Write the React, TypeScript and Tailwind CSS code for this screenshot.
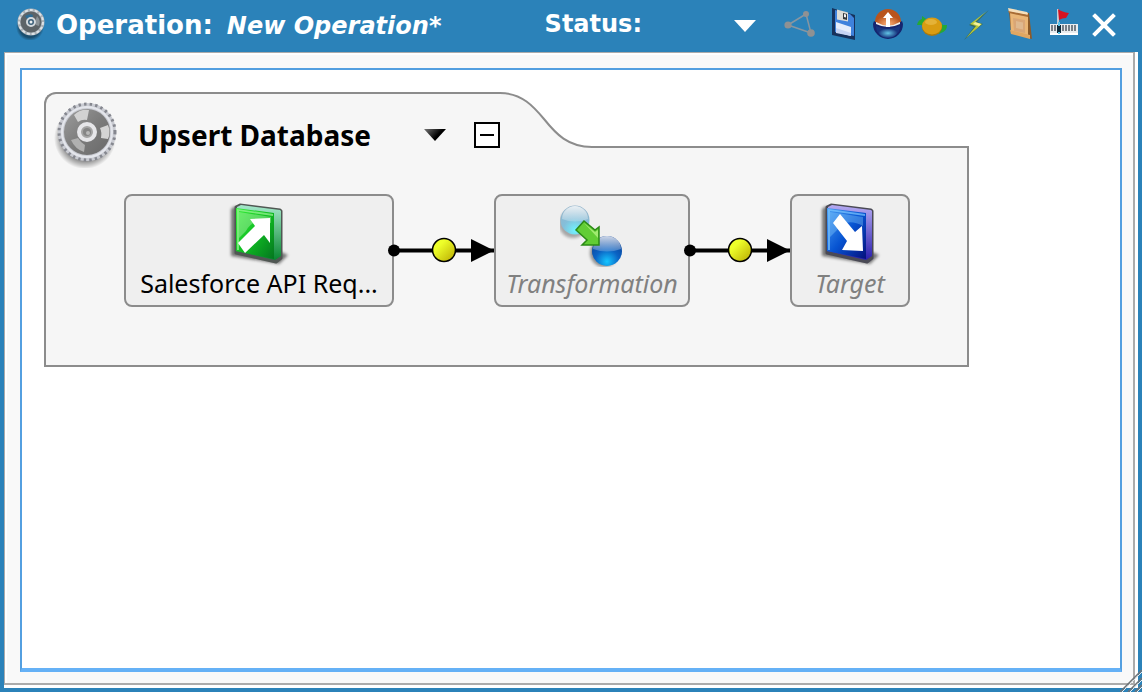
import { useState } from 'react';
import type { ReactNode } from 'react';

interface IconButtonProps {
  label: string;
  children: ReactNode;
}

interface NodeProps {
  label: string;
  width: string;
  placeholder?: boolean;
  children: ReactNode;
}

function GearIcon({ className }: { className: string }) {
  return (
    <svg viewBox="0 0 66 66" className={className} aria-hidden="true">
      <defs>
        <linearGradient id="gear-face" x1="0" y1="0" x2="1" y2="1">
          <stop offset="0" stopColor="#a2a2a2" />
          <stop offset="0.5" stopColor="#7c7c7c" />
          <stop offset="1" stopColor="#666" />
        </linearGradient>
        <radialGradient id="gear-shadow">
          <stop offset="0.75" stopColor="#000" stopOpacity="0.4" />
          <stop offset="1" stopColor="#000" stopOpacity="0" />
        </radialGradient>
      </defs>
      <circle cx="31" cy="36" r="31" fill="url(#gear-shadow)" />
      <circle cx="33" cy="30" r="27" fill="url(#gear-face)" />
      <circle cx="33" cy="30" r="26" fill="none" stroke="#c9cbd2" strokeWidth="6" />
      <circle cx="33" cy="30" r="28" fill="none" stroke="#85878f" strokeWidth="3" strokeDasharray="2.4 3.2" />
      <circle cx="33" cy="30" r="25" fill="none" stroke="#e4e6ec" strokeWidth="2" />
      <path d="M20 13q6-6 15-5l-2 10q-5-1-9 2z" fill="#d2d2d2" />
      <path d="M54 23q3 7 0 14l-7-1q1-6-1-10z" fill="#d4d4d4" />
      <path d="M17 38l7-2q3 5 7 7l-1 7q-9-3-13-12z" fill="#b0b0b0" />
      <circle cx="33" cy="30" r="8" fill="#a4a4a4" stroke="#e6e6e9" strokeWidth="4" />
      <circle cx="33" cy="30" r="4" fill="#858585" />
      <circle cx="34" cy="31" r="2" fill="#b9b9b9" />
    </svg>
  );
}

function WindowIcon() {
  return (
    <svg viewBox="0 0 32 32" className="ml-3 size-8" aria-hidden="true">
      <circle cx="14" cy="19" r="14" fill="url(#gear-shadow)" />
      <circle cx="15" cy="14" r="12" fill="#5d6468" stroke="#a9b1b7" strokeWidth="3" />
      <circle cx="15" cy="14" r="12" fill="none" stroke="#dde2e6" strokeWidth="2" strokeDasharray="3 2" />
      <path d="M9 8q5-3 8-1l-1 4-4 1z" fill="#2f6d96" />
      <path d="M21 8q4 4 2 10l-3-1V11z" fill="#8a9297" />
      <circle cx="15" cy="14" r="4" fill="#3b5f79" stroke="#d4dade" strokeWidth="2" />
      <circle cx="15" cy="14" r="1.500" fill="#eef1f3" />
    </svg>
  );
}

function ShareIcon() {
  return (
    <svg viewBox="0 0 32 32" className="size-8" aria-hidden="true">
      <path d="M4 17L22 6L27 25Z" fill="none" stroke="#8796a1" strokeWidth="1.500" />
      <circle cx="4" cy="17" r="3.600" fill="#8f9193" />
      <circle cx="22" cy="6" r="3" fill="#8f9193" />
      <circle cx="27" cy="25" r="3.800" fill="#8f9193" />
    </svg>
  );
}

function SaveIcon() {
  return (
    <svg viewBox="0 0 32 32" className="size-8" aria-hidden="true">
      <path d="M4 0l3 1 20 6v25L4 27z" fill="#16325c" />
      <path d="M7 2l15 4 4 4v18L7 24z" fill="#3f82dc" />
      <path d="M9 1.500l11 3v9l-11-2z" fill="#dcdcd6" />
      <path d="M15 5l4 1v6l-4-1z" fill="#33373b" />
      <path d="M16 6l2 .5v3l-2-.5z" fill="#f5f5f5" />
      <path d="M8 14l15 5v9L8 24z" fill="#e4edfb" />
      <path d="M8 20l15 5v3L8 25z" fill="#c5d5f5" />
    </svg>
  );
}

function DeployIcon() {
  return (
    <svg viewBox="0 0 32 32" className="size-8" aria-hidden="true">
      <defs>
        <radialGradient id="deploy-top" cy="0.9">
          <stop offset="0" stopColor="#ffb27a" />
          <stop offset="1" stopColor="#b9541c" />
        </radialGradient>
        <radialGradient id="deploy-base" cy="0.6">
          <stop offset="0" stopColor="#62c4e6" />
          <stop offset="0.8" stopColor="#17357f" />
        </radialGradient>
      </defs>
      <path d="M3 14a13 13 0 0 1 26 0q-13 8-26 0z" fill="url(#deploy-top)" />
      <path d="M1 16l1-3q14 10 28 0l1 3a15 15 0 0 1-30 0z" fill="#15256f" />
      <path d="M4 18q12 6 24 0a12 12 0 0 1-24 0z" fill="url(#deploy-base)" />
      <path d="M4 14q12 7 24 0v2q-12 6-24 0z" fill="#f4eee9" />
      <path d="M16 4l5 6h-3v9h-4v-9h-3z" fill="#fff" />
    </svg>
  );
}

function RefreshIcon() {
  return (
    <svg viewBox="0 0 32 32" className="size-8" aria-hidden="true">
      <path d="M1 17q1-5 5-6l0-3 7 5-5 6-3-2z" fill="#25a835" />
      <path d="M31 17q0 6-6 8l-2 1-6-4 9-6 1 1z" fill="#25a835" />
      <ellipse cx="16" cy="19" rx="10" ry="9" fill="#a8790e" />
      <ellipse cx="16" cy="18" rx="10" ry="8.500" fill="#d99c12" />
      <ellipse cx="15" cy="14" rx="6" ry="3" fill="#e4b238" />
    </svg>
  );
}

function RunIcon() {
  return (
    <svg viewBox="0 0 32 32" className="size-8" aria-hidden="true">
      <path d="M29 2L9 17l5 2L4 32l19-16-6-2z" fill="#356b63" />
      <path d="M27 3L10 16l6 2L6 30l16-14-7-2z" fill="#b9c83a" />
      <path d="M22 8l-9 8 6 2-5 6 7-8-6-2z" fill="#f2f19c" />
    </svg>
  );
}

function LogIcon() {
  return (
    <svg viewBox="0 0 32 32" className="size-8" aria-hidden="true">
      <path d="M5 3l2 22 21 6-3-26z" fill="#8d5a28" />
      <path d="M6 4l18 4v21L7 24z" fill="#eab676" />
      <path d="M9 10l12 2v13l-11-2z" fill="#d9a676" />
      <path d="M12 13l7 1.500v7l-7-1.500z" fill="#dfb990" />
      <path d="M4 0l19 4q2 2 0 3L5 4z" fill="#f6dfba" />
      <path d="M4 3l20 4v2L5 5z" fill="#a86c34" />
      <path d="M6 22l20 5v4L7 26z" fill="#e0a763" />
    </svg>
  );
}

function MilestoneIcon() {
  return (
    <svg viewBox="0 0 32 32" className="size-8" aria-hidden="true">
      <path d="M10 1v18" stroke="#c3ced6" strokeWidth="2" />
      <path d="M10 1q4 3 11 4l-3 5q-4 0-7 2z" fill="#d61221" />
      <path d="M2 16h28v11H2z" fill="#e9ecef" />
      <path d="M2 25h28v2H2z" fill="#fff" />
      <path d="M4 17v6M7 17v6M15 17v6M18 17v6M21 17v6M24 17v6M27 17v6" stroke="#777f86" strokeWidth="2" />
      <path d="M9 17h4v8H9z" fill="#0d2c3c" />
      <path d="M10 14h2v4h-2zM10 24h2v2h-2z" fill="#5cc4ea" />
    </svg>
  );
}

function SourceIcon() {
  return (
    <svg viewBox="0 0 64 64" className="size-16" aria-hidden="true">
      <defs>
        <linearGradient id="source-face" x1="0" y1="0" x2="1" y2="1">
          <stop offset="0" stopColor="#39f03b" />
          <stop offset="0.5" stopColor="#0fbd22" />
          <stop offset="1" stopColor="#04751f" />
        </linearGradient>
        <linearGradient id="source-side" x1="0" y1="0" x2="0" y2="1">
          <stop offset="0" stopColor="#a5e8cb" />
          <stop offset="1" stopColor="#07872f" />
        </linearGradient>
        <filter id="tile-shadow">
          <feGaussianBlur stdDeviation="1.8" />
        </filter>
      </defs>
      <path d="M4 6l4-3 46 46 7 3-9 9L4 53z" fill="#000" opacity="0.5" filter="url(#tile-shadow)" />
      <path d="M9 4l4-2 40 5 1 1v47l-5 4L9 50z" fill="#505753" stroke="#505753" strokeWidth="3" strokeLinejoin="round" />
      <path d="M10 4l4-2 39 5 1 1v45l-6 4L9 48z" fill="url(#source-side)" />
      <path d="M9 5l38 5v46L9 48z" fill="url(#source-face)" />
      <path d="M10 6l36 5v2L12 8v39l-2 0z" fill="#9df59a" opacity="0.7" />
      <path d="M12 9l32 5v6Q26 14 19 28l-7 7z" fill="#c4f5be" opacity="0.4" />
      <path d="M43 15v25l-6-8-19 18-7-10 17-17-5-7z" fill="#fff" />
    </svg>
  );
}

function TargetIcon() {
  return (
    <svg viewBox="0 0 64 64" className="size-16" aria-hidden="true">
      <defs>
        <linearGradient id="target-face" x1="0" y1="0" x2="1" y2="1">
          <stop offset="0" stopColor="#4ba0f4" />
          <stop offset="0.5" stopColor="#0754d2" />
          <stop offset="1" stopColor="#05107c" />
        </linearGradient>
        <linearGradient id="target-side" x1="0" y1="0" x2="0" y2="1">
          <stop offset="0" stopColor="#b4a9f2" />
          <stop offset="1" stopColor="#2a1fae" />
        </linearGradient>
      </defs>
      <path d="M4 6l4-3 46 46 7 3-9 9L4 53z" fill="#000" opacity="0.5" filter="url(#tile-shadow)" />
      <path d="M9 4l4-2 40 5 1 1v47l-5 4L9 50z" fill="#4a4a55" stroke="#4a4a55" strokeWidth="3" strokeLinejoin="round" />
      <path d="M10 4l4-2 39 5 1 1v45l-6 4L9 48z" fill="url(#target-side)" />
      <path d="M9 5l39 5v46L9 48z" fill="url(#target-face)" />
      <path d="M10 6l37 5v2L12 8v39l-2 0z" fill="#7cc7ff" opacity="0.7" />
      <path d="M12 9l33 5v9Q28 14 19 27l-7 7z" fill="#8fd4ff" opacity="0.35" />
      <path d="M22 11l15 18 7-6 1 25-21-1 5-9-14-18z" fill="#fff" />
    </svg>
  );
}

function TransformationIcon() {
  return (
    <svg viewBox="0 0 64 64" className="size-16" aria-hidden="true">
      <defs>
        <radialGradient id="ball-light" cy="0.85" r="0.8">
          <stop offset="0" stopColor="#6ff2ff" />
          <stop offset="0.5" stopColor="#84bfda" />
          <stop offset="1" stopColor="#93b4ca" />
        </radialGradient>
        <radialGradient id="ball-dark" cy="0.85" r="0.8">
          <stop offset="0" stopColor="#16c6ff" />
          <stop offset="0.5" stopColor="#0a63c4" />
          <stop offset="1" stopColor="#0b3f93" />
        </radialGradient>
        <linearGradient id="ball-shine" x1="0" y1="0" x2="0" y2="1">
          <stop offset="0" stopColor="#fff" stopOpacity="0.8" />
          <stop offset="1" stopColor="#fff" stopOpacity="0.2" />
        </linearGradient>
      </defs>
      <circle cx="13" cy="21" r="14" fill="#000" opacity="0.3" filter="url(#tile-shadow)" />
      <circle cx="44" cy="50" r="14" fill="#000" opacity="0.4" filter="url(#tile-shadow)" />
      <circle cx="15" cy="17" r="14.500" fill="url(#ball-light)" />
      <path d="M2 16a13 13 0 0 1 26 0q-13 5-26 0z" fill="url(#ball-shine)" />
      <circle cx="47" cy="48" r="15" fill="url(#ball-dark)" />
      <path d="M33 46a14 13 0 0 1 28 0q-14 5-28 0z" fill="url(#ball-shine)" />
      <path d="M24 18l11 9 4-3v18H22l5-5-11-10z" fill="#62cd35" stroke="#2b8a16" strokeWidth="1.500" />
      <path d="M24 20l11 9 3-2v8z" fill="#a0ea70" />
    </svg>
  );
}

function Connector() {
  return (
    <svg viewBox="0 0 100 26" className="h-[26px] w-[100px] shrink-0 overflow-visible" aria-hidden="true">
      <defs>
        <linearGradient id="connector-dot" x1="0" y1="0" x2="1" y2="1">
          <stop offset="0.3" stopColor="#eeff2a" />
          <stop offset="1" stopColor="#b8a800" />
        </linearGradient>
      </defs>
      <path d="M0 12.500H100" stroke="#000" strokeWidth="4" />
      <circle cx="0" cy="12.500" r="6" />
      <circle cx="50" cy="12" r="11.500" fill="url(#connector-dot)" stroke="#000" strokeWidth="1.500" />
      <path d="M77 1v23l23-11.500z" />
    </svg>
  );
}

function IconButton({ label, children }: IconButtonProps) {
  return (
    <button type="button" aria-label={label} className="flex w-11 items-center justify-center">
      {children}
    </button>
  );
}

function OperationNode({ label, width, placeholder, children }: NodeProps) {
  return (
    <button
      type="button"
      className={`${width} flex shrink-0 flex-col items-center rounded-lg border-2 border-[#8c8c8c] bg-[#efefef] pt-[7px] pb-[6px]`}
    >
      {children}
      <span
        className={`text-[25px] leading-8 whitespace-nowrap ${placeholder ? 'text-[#808080] italic' : 'text-black'}`}
      >
        {label}
      </span>
    </button>
  );
}

export default function App() {
  const [expanded, setExpanded] = useState(true);

  return (
    <div className="relative flex min-h-screen flex-col bg-[#2b82b9] pr-1 pb-1 pl-1">
      <header className="flex h-[52px] items-center pb-1 font-['DejaVu_Sans',sans-serif] text-[24px] font-bold whitespace-nowrap text-white">
        <WindowIcon />
        <div className="ml-2 flex items-baseline gap-[14px] pt-[2px]">
          <h1 className="text-[26px]">Operation:</h1>
          <span className="italic">New Operation*</span>
        </div>

        <label htmlFor="status" className="ml-auto">Status:</label>
        <div className="relative">
          <select id="status" className="block h-9 w-[136px] appearance-none bg-transparent">
            <option value=""></option>
          </select>
          <svg viewBox="0 0 22 12" className="pointer-events-none absolute top-[14px] right-[22px] h-3 w-[22px]" aria-hidden="true">
            <path d="M0 0h22L11 12z" fill="#fff" />
          </svg>
        </div>

        <IconButton label="Share"><ShareIcon /></IconButton>
        <IconButton label="Save"><SaveIcon /></IconButton>
        <IconButton label="Deploy"><DeployIcon /></IconButton>
        <IconButton label="Refresh"><RefreshIcon /></IconButton>
        <IconButton label="Run"><RunIcon /></IconButton>
        <IconButton label="Log"><LogIcon /></IconButton>
        <IconButton label="Milestone"><MilestoneIcon /></IconButton>
        <button type="button" aria-label="Close" className="mr-4 flex w-9 items-center justify-center pt-[2px]">
          <svg viewBox="0 0 24 24" className="size-6" aria-hidden="true">
            <path d="M3 3l18 18M21 3L3 21" stroke="#fff" strokeWidth="4" strokeLinecap="square" />
          </svg>
        </button>
      </header>

      <div className="flex flex-1 flex-col border-r-3 border-b-3 border-white">
        <div className="flex flex-1 flex-col border-t border-r-2 border-b-2 border-l border-[#ababab]">
          <div className="flex flex-1 flex-col border-t-2 border-l-2 border-white bg-[#f9f9f9] pt-[13px] pr-[11px] pb-[11px] pl-[13px]">
            <main className="flex-1 border-2 border-b-4 border-[#539fe0] border-b-[#65b1f6] bg-white px-[22px] pt-[22px] font-['Noto_Sans',sans-serif]">
              <section className="w-fit">
                <div className="flex">
                  <div className="flex items-center rounded-tl-xl border-t-2 border-l-2 border-[#8c8c8c] bg-[#f6f6f6] pt-7 pl-2">
                    <GearIcon className="-my-5 size-[66px]" />
                    <h2 className="ml-[18px] text-[28px] leading-[26px] font-bold whitespace-nowrap text-black">
                      Upsert Database
                    </h2>
                    <button type="button" aria-label="Operation menu" className="ml-10 flex w-12 justify-center">
                      <svg viewBox="0 0 22 12" className="h-3 w-[22px]" aria-hidden="true">
                        <defs>
                          <linearGradient id="menu-caret" x1="0" y1="0" x2="1" y2="0.5">
                            <stop offset="0" stopColor="#777" />
                            <stop offset="0.7" stopColor="#000" />
                          </linearGradient>
                        </defs>
                        <path d="M0 0h22L11 12z" fill="url(#menu-caret)" />
                      </svg>
                    </button>
                    <button
                      type="button"
                      aria-label="Collapse"
                      aria-expanded={expanded}
                      onClick={() => setExpanded(!expanded)}
                      className="ml-[15px] flex size-[26px] items-center justify-center border-2 border-black bg-white"
                    >
                      <span className="h-[2px] w-[14px] bg-black" />
                    </button>
                  </div>
                  <svg viewBox="0 0 92 56" className="h-14 w-[92px] shrink-0" aria-hidden="true">
                    <path d="M0 1C22 1 34 15 44 27C56 42 68 55 92 55V56H0Z" fill="#f6f6f6" />
                    <path d="M0 1C22 1 34 15 44 27C56 42 68 55 92 55" fill="none" stroke="#8c8c8c" strokeWidth="2" />
                  </svg>
                  <div className="flex-1 border-b-2 border-[#8c8c8c]" />
                </div>

                <div className="border-r-2 border-b-2 border-l-2 border-[#8c8c8c] bg-[#f6f6f6]">
                  {expanded && (
                    <div className="flex items-center pt-[46px] pr-[57px] pb-[58px] pl-[78px]">
                      <OperationNode label="Salesforce API Req..." width="w-[270px]">
                        <SourceIcon />
                      </OperationNode>
                      <Connector />
                      <OperationNode label="Transformation" width="w-[196px]" placeholder>
                        <TransformationIcon />
                      </OperationNode>
                      <Connector />
                      <OperationNode label="Target" width="w-[120px]" placeholder>
                        <TargetIcon />
                      </OperationNode>
                    </div>
                  )}
                </div>
              </section>
            </main>
          </div>
        </div>
      </div>

      {/* resize grip over the window corner */}
      <svg viewBox="0 0 22 22" className="absolute right-0 bottom-0 size-[22px]" aria-hidden="true">
        <path d="M0 22L22 0M8 22L22 8M15 22L22 15" stroke="#6f7376" strokeWidth="1.500" />
        <path d="M2 22L22 2M10 22L22 10M17 22L22 17" stroke="#e5e9ec" strokeWidth="1" />
      </svg>
    </div>
  );
}
